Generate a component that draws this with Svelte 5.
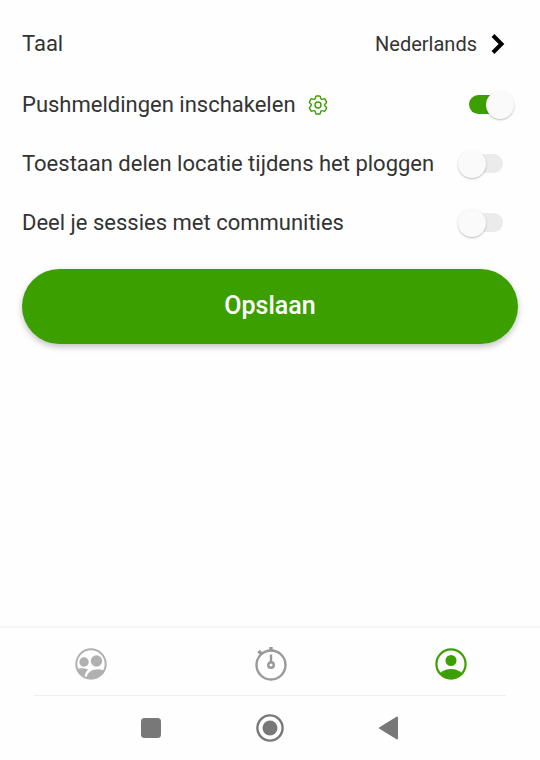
<script lang="ts">
  let language = $state("Nederlands");
  let push = $state(true);
  let location = $state(false);
  let sessions = $state(false);
</script>

<div class="screen">
  <form class="settings" onsubmit={(e) => e.preventDefault()}>
    <div class="row language">
      <span id="language-label">Taal</span>
      <button type="button" class="picker" aria-labelledby="language-label language-value">
        <span id="language-value">{language}</span>
        <svg class="chevron" viewBox="0 0 14 20" aria-hidden="true">
          <path d="M2 1.500 10.500 10 2 18.500" fill="none" stroke="#000" stroke-width="4" />
        </svg>
      </button>
    </div>

    <div class="row">
      <div class="with-icon">
        <label for="push">Pushmeldingen inschakelen</label>
        <button type="button" class="gear" aria-label="Instellingen voor meldingen">
          <svg viewBox="2 2 20 20" aria-hidden="true">
            <path d="M9.594 3.940c.09-.542.56-.940 1.110-.940h2.593c.55 0 1.020.398 1.110.940l.213 1.281c.063.374.313.686.645.870.074.040.147.083.220.127.325.196.720.257 1.075.124l1.217-.456a1.125 1.125 0 0 1 1.370.490l1.296 2.247a1.125 1.125 0 0 1-.260 1.431l-1.003.827c-.293.241-.438.613-.430.992a7.723 7.723 0 0 1 0 .255c-.008.378.137.750.430.991l1.004.827c.424.350.534.955.260 1.430l-1.298 2.247a1.125 1.125 0 0 1-1.369.491l-1.217-.456c-.355-.133-.750-.072-1.076.124a6.470 6.470 0 0 1-.220.128c-.331.183-.581.495-.644.869l-.213 1.281c-.090.543-.560.940-1.110.940h-2.594c-.550 0-1.019-.398-1.110-.940l-.213-1.281c-.062-.374-.312-.686-.644-.870a6.520 6.520 0 0 1-.220-.127c-.325-.196-.720-.257-1.076-.124l-1.217.456a1.125 1.125 0 0 1-1.369-.490l-1.297-2.247a1.125 1.125 0 0 1 .260-1.431l1.004-.827c.292-.240.437-.613.430-.991a6.932 6.932 0 0 1 0-.255c.007-.380-.138-.751-.430-.992l-1.004-.827a1.125 1.125 0 0 1-.260-1.430l1.297-2.247a1.125 1.125 0 0 1 1.370-.491l1.216.456c.356.133.751.072 1.076-.124.072-.044.146-.086.220-.128.332-.183.582-.495.644-.869l.214-1.280Z" />
            <circle cx="12" cy="12" r="3" />
          </svg>
        </button>
      </div>
      <input id="push" class="switch" type="checkbox" role="switch" bind:checked={push} />
    </div>

    <div class="row">
      <label for="location">Toestaan delen locatie tijdens het ploggen</label>
      <input id="location" class="switch" type="checkbox" role="switch" bind:checked={location} />
    </div>

    <div class="row">
      <label for="sessions">Deel je sessies met communities</label>
      <input id="sessions" class="switch" type="checkbox" role="switch" bind:checked={sessions} />
    </div>

    <button class="save" type="submit">Opslaan</button>
  </form>

  <nav class="tabs">
    <button type="button" aria-label="Communities">
      <svg class="tab-icon muted" viewBox="0 0 32 32" aria-hidden="true">
        <defs>
          <clipPath id="group-clip"><circle cx="16" cy="16" r="15" /></clipPath>
        </defs>
        <g clip-path="url(#group-clip)" fill="currentColor">
          <circle cx="9" cy="14" r="4.700" />
          <circle cx="21.500" cy="13" r="5.700" />
          <path d="M1 21.500c4-1.800 9-1.800 12.200.2-2 1.500-3.300 3.800-3.700 6.800L6 30z" />
          <path d="M11.500 31c0-11 16-12 20-6v7h-20z" />
        </g>
        <circle cx="16" cy="16" r="14.700" fill="none" stroke="currentColor" stroke-width="2" />
      </svg>
    </button>
    <button type="button" aria-label="Sessie">
      <svg class="tab-icon timer" viewBox="0 0 32 36" aria-hidden="true" fill="none" stroke="currentColor" stroke-width="2.400">
        <circle cx="16" cy="19" r="14.500" />
        <path d="M16 1v4M3.500 5l3.500 3.500" stroke-width="3.400" />
        <path d="M16 8.500v8" />
        <circle cx="16" cy="19" r="2.800" />
      </svg>
    </button>
    <button type="button" aria-label="Profiel" aria-current="page">
      <svg class="tab-icon active" viewBox="0 0 32 32" aria-hidden="true">
        <defs>
          <clipPath id="profile-clip"><circle cx="16" cy="16" r="15" /></clipPath>
        </defs>
        <g clip-path="url(#profile-clip)" fill="currentColor">
          <circle cx="16" cy="12.500" r="5.500" />
          <ellipse cx="16" cy="29" rx="12" ry="8" />
        </g>
        <circle cx="16" cy="16" r="14.600" fill="none" stroke="currentColor" stroke-width="2.200" />
      </svg>
    </button>
  </nav>

  <div class="system">
    <button type="button" aria-label="Recente apps">
      <svg viewBox="0 0 28 28" aria-hidden="true">
        <rect x="4" y="4" width="20" height="20" rx="3.500" fill="currentColor" />
      </svg>
    </button>
    <button type="button" aria-label="Startscherm">
      <svg viewBox="0 0 28 28" aria-hidden="true">
        <circle cx="14" cy="14" r="12.600" fill="none" stroke="currentColor" stroke-width="2.400" />
        <circle cx="14" cy="14" r="7.500" fill="currentColor" />
      </svg>
    </button>
    <button type="button" aria-label="Terug">
      <svg viewBox="0 0 28 28" aria-hidden="true">
        <path d="M5 14 22 3.500v21z" fill="currentColor" stroke="currentColor" stroke-width="2" stroke-linejoin="round" />
      </svg>
    </button>
  </div>
</div>

<style>
  :global(body) {
    background: #fefefe;
  }
  .screen {
    --green: #3c9f00;
    display: flex;
    flex-direction: column;
    min-height: 100vh;
    color: #333;
    font-family: Roboto, "Liberation Sans", sans-serif;
    font-size: 22px;
    line-height: 28px;
  }
  button {
    border: 0;
    padding: 0;
    background: none;
    color: inherit;
    font: inherit;
    cursor: pointer;
  }
  svg {
    display: block;
  }
  .settings {
    flex: 1;
    padding: 12px 22px 24px;
  }
  .row {
    display: flex;
    align-items: center;
    justify-content: space-between;
    gap: 16px;
    min-height: 59px;
    padding-right: 4px;
  }
  .language {
    min-height: 63px;
    padding-right: 13px;
  }
  .picker {
    display: flex;
    align-items: center;
    gap: 14px;
    font-size: 20px;
  }
  .chevron {
    width: 14px;
    height: 20px;
  }
  .with-icon {
    display: flex;
    align-items: center;
    gap: 12px;
  }
  .gear svg {
    width: 20px;
    height: 20px;
    fill: none;
    stroke: var(--green);
    stroke-width: 1.4;
    stroke-linejoin: round;
  }

  .switch {
    appearance: none;
    display: grid;
    align-items: center;
    flex: none;
    width: 56px;
    height: 28px;
    margin: 0;
    cursor: pointer;
  }
  .switch::before,
  .switch::after {
    content: "";
    grid-area: 1 / 1;
  }
  .switch::before {
    height: 19px;
    margin: 0 11px;
    border-radius: 10px;
    background: #ebebeb;
  }
  .switch::after {
    width: 28px;
    height: 28px;
    border-radius: 50%;
    background: #fafafa;
    box-shadow: 0 1px 2px rgba(0, 0, 0, 0.25);
  }
  .switch:checked::before {
    background: var(--green);
  }
  .switch:checked::after {
    justify-self: end;
  }

  .save {
    display: block;
    width: 100%;
    height: 75px;
    margin-top: 17px;
    padding-bottom: 2px;
    border-radius: 38px;
    background: var(--green);
    box-shadow: 0 3px 6px rgba(0, 0, 0, 0.24);
    color: #fff;
    font-size: 25px;
    font-weight: 500;
  }

  .tabs {
    display: grid;
    grid-template-columns: repeat(3, 1fr);
    height: 67px;
    border-top: 2px solid #f5f5f5;
  }
  .tabs button,
  .system button {
    display: flex;
    align-items: center;
    justify-content: center;
  }
  .tabs button {
    padding: 5px 0 0 1px;
  }
  .tab-icon {
    width: 32px;
    height: 32px;
  }
  .muted {
    color: #b0b0b0;
  }
  .timer {
    height: 36px;
    color: #999;
  }
  .active {
    color: var(--green);
  }

  .system {
    display: grid;
    grid-template-columns: repeat(3, 1fr);
    height: 64px;
    margin: 0 34px;
    padding: 0 58px;
    border-top: 1px solid #efefef;
    color: #787878;
  }
  .system svg {
    width: 28px;
    height: 28px;
  }
</style>
